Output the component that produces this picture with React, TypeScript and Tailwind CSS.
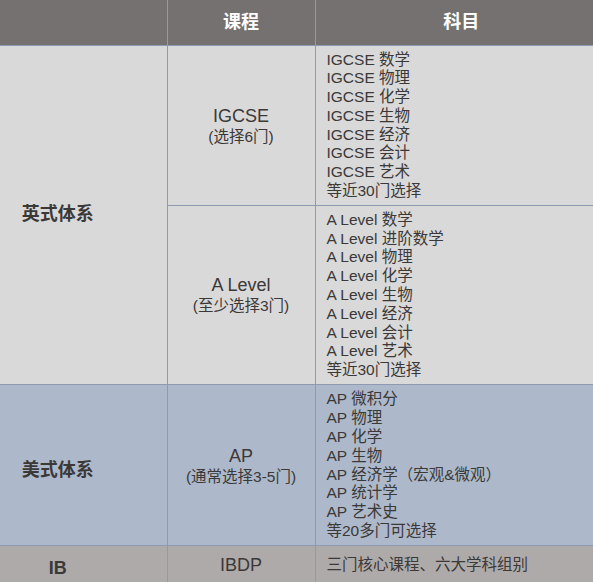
const igcse = [
  "IGCSE 数学",
  "IGCSE 物理",
  "IGCSE 化学",
  "IGCSE 生物",
  "IGCSE 经济",
  "IGCSE 会计",
  "IGCSE 艺术",
  "等近30门选择",
];

const aLevel = [
  "A Level 数学",
  "A Level 进阶数学",
  "A Level 物理",
  "A Level 化学",
  "A Level 生物",
  "A Level 经济",
  "A Level 会计",
  "A Level 艺术",
  "等近30门选择",
];

const ap = [
  "AP 微积分",
  "AP 物理",
  "AP 化学",
  "AP 生物",
  "AP 经济学（宏观&微观）",
  "AP 统计学",
  "AP 艺术史",
  "等20多门可选择",
];

const cell = "border border-[#8e9ab0] align-middle";

function Subjects({ items }: { items: string[] }) {
  return (
    <td className={`${cell} px-[11px] pt-[5px] pb-[4px] text-left text-[15.5px] leading-[18.8px]`}>
      {items.map((s) => (
        <div key={s}>{s}</div>
      ))}
    </td>
  );
}

function Course({ name, note }: { name: string; note: string }) {
  return (
    <td className={`${cell} text-center`}>
      <div className="text-[18px] leading-[22px]">{name}</div>
      <div className="text-[15.5px] leading-[19px]">{note}</div>
    </td>
  );
}

export default function App() {
  return (
    <div
      className="w-[593px] h-[582px] overflow-hidden bg-white text-[#3b3838]"
      style={{ fontFamily: '"Liberation Sans", Arial, "Noto Sans CJK SC", sans-serif' }}
    >
      <table className="w-[593px] table-fixed border-collapse border-hidden">
        <colgroup>
          <col className="w-[167px]" />
          <col className="w-[148px]" />
          <col className="w-[278px]" />
        </colgroup>
        <thead>
          <tr className="h-[45px] bg-[#767171] text-[18px] font-bold text-white">
            <th className={`${cell} border-[#8b8f99]`}></th>
            <th className={`${cell} border-[#8b8f99]`}>课程</th>
            <th className={`${cell} border-[#8b8f99] pl-[14px]`}>科目</th>
          </tr>
        </thead>
        <tbody>
          <tr className="bg-[#d9d9d9]">
            <td rowSpan={2} className={`${cell} pr-[51px] text-center text-[18px] font-bold`}>
              英式体系
            </td>
            <Course name="IGCSE" note="(选择6门)" />
            <Subjects items={igcse} />
          </tr>
          <tr className="bg-[#d9d9d9]">
            <Course name="A Level" note="(至少选择3门)" />
            <Subjects items={aLevel} />
          </tr>
          <tr className="h-[161px] bg-[#adb9ca]">
            <td className={`${cell} pr-[51px] pt-[10px] text-center text-[18px] font-bold`}>
              美式体系
            </td>
            <Course name="AP" note="(通常选择3-5门)" />
            <Subjects items={ap} />
          </tr>
          <tr className="h-[40px] bg-[#aeaaaa]">
            <td className={`${cell} pr-[51px] pt-[6px] text-center text-[18px] font-bold`}>IB</td>
            <td className={`${cell} text-center text-[18px]`}>IBDP</td>
            <td className={`${cell} px-[11px] text-left text-[15.5px] leading-[18.8px]`}>
              三门核心课程、六大学科组别
            </td>
          </tr>
        </tbody>
      </table>
    </div>
  );
}
